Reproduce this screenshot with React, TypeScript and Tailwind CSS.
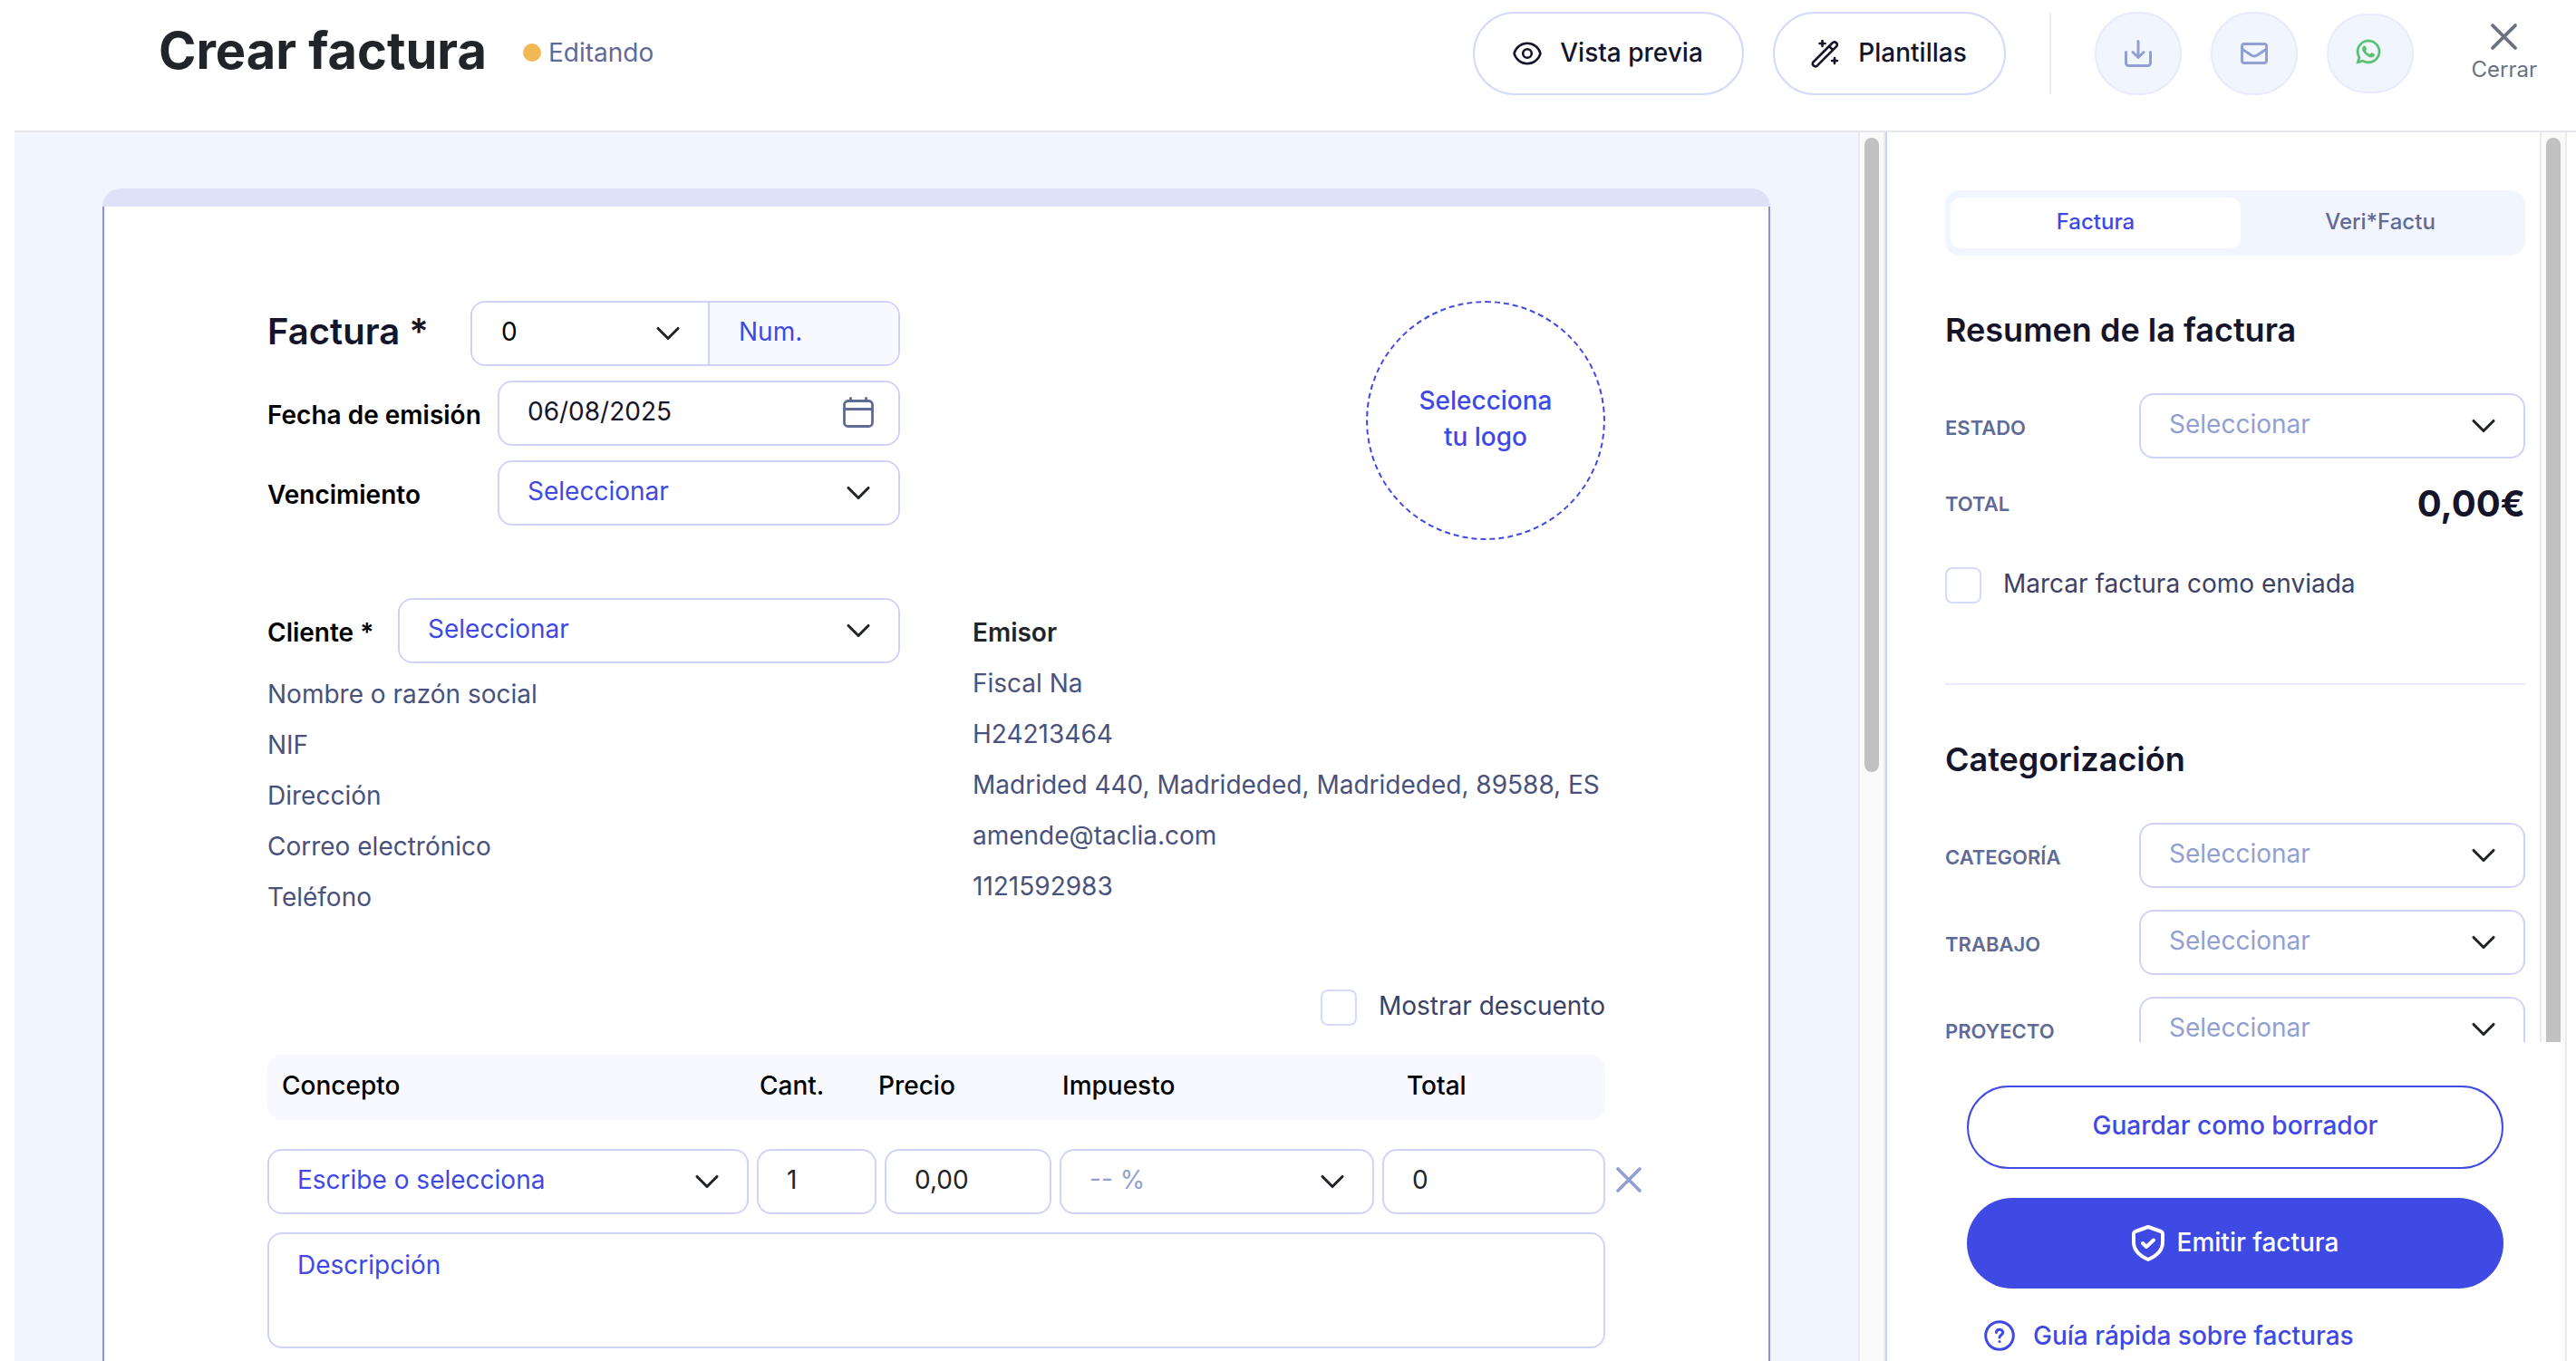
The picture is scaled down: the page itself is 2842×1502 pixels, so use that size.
import React, { useState } from 'react'
import { ChevronDown } from 'lucide-react'
import { FaWhatsapp } from 'react-icons/fa'

const fieldClass =
  'h-[72px] w-full rounded-2xl border-2 border-[#d0d3f8] bg-white px-[31px] pb-1 text-[28px] outline-none'

type SelectProps = {
  id: string
  placeholder: string
  label?: string
  tone?: string
  className?: string
}

const SelectField: React.FC<SelectProps> = ({
  id,
  placeholder,
  label,
  tone = 'text-[#3f49e3]',
  className = '',
}) => (
  <div className={`relative min-w-0 ${className}`}>
    <select
      id={id}
      aria-label={label}
      className={`${fieldClass} appearance-none ${tone}`}
    >
      <option>{placeholder}</option>
    </select>
    <ChevronDown
      size={44}
      strokeWidth={1.7}
      className="pointer-events-none absolute right-6 top-3.5 text-[#212529]"
    />
  </div>
)

type CheckProps = { id: string; label: string }

const CheckField: React.FC<CheckProps> = ({ id, label }) => (
  <div className="flex items-center gap-6">
    <input
      id={id}
      type="checkbox"
      className="size-10 appearance-none rounded-lg border-2 border-[#d5dcfa] bg-white checked:bg-[#3f49e3]"
    />
    <label htmlFor={id} className="pb-1 text-[28px] leading-9 text-[#3b4266]">
      {label}
    </label>
  </div>
)

const Scrollbar: React.FC<{ thumb: string }> = ({ thumb }) => (
  <div
    aria-hidden="true"
    className="flex w-[30px] shrink-0 justify-center border-x-2 border-[#ebebeb] bg-[#fafafa] pt-1.5"
  >
    <div className={`w-4 rounded-full bg-[#c1c1c1] ${thumb}`} />
  </div>
)

const EyeIcon = () => (
  <svg width="32" height="26" viewBox="0 0 32 26" fill="none" stroke="currentColor" strokeWidth="2.6">
    <path d="M1.500 13C3.500 6 9.500 1.800 16 1.800S28.500 6 30.500 13C28.500 20 22.500 24.200 16 24.200S3.500 20 1.500 13Z" strokeLinejoin="round" />
    <circle cx="16" cy="13" r="4.800" />
  </svg>
)

const WandIcon = () => (
  <svg width="32" height="32" viewBox="0 0 32 32" fill="none" stroke="currentColor" strokeWidth="2.6" strokeLinecap="round" strokeLinejoin="round">
    <path d="M2.500 25.500 24 4a3 3 0 0 1 4.200 4.200L6.700 29.700a3 3 0 0 1-4.200-4.200ZM20 8l4.200 4.200" />
    <path d="M12.500 2v6M9.500 5h6M26 21v6M23 24h6" />
  </svg>
)

const DownloadIcon = () => (
  <svg width="30" height="30" viewBox="0 0 30 30" fill="none" stroke="currentColor" strokeWidth="3" strokeLinecap="round" strokeLinejoin="round">
    <path d="M1.500 13.500v12a3 3 0 0 0 3 3h21a3 3 0 0 0 3-3v-12M15 1.500V19M9 13.500l6 6 6-6" />
  </svg>
)

const MailIcon = () => (
  <svg width="30" height="24" viewBox="0 0 30 24" fill="none" stroke="currentColor" strokeWidth="3" strokeLinejoin="round">
    <rect x="1.500" y="1.500" width="27" height="21" rx="2.500" />
    <path d="m2 7.500 9.500 6.300a6.500 6.500 0 0 0 7 0L28 7.500" />
  </svg>
)

const CloseIcon: React.FC<{ size: number }> = ({ size }) => (
  <svg width={size} height={size} viewBox="0 0 28 28" fill="none" stroke="currentColor" strokeWidth="3.6" strokeLinecap="round">
    <path d="M2 2l24 24M26 2 2 26" />
  </svg>
)

const CalendarIcon = () => (
  <svg width="34" height="34" viewBox="0 0 34 34" fill="none" stroke="currentColor" strokeWidth="2.8" strokeLinecap="round">
    <rect x="1.500" y="4.500" width="31" height="28" rx="4" />
    <path d="M1.500 13.500h31M8.500 1.500v3M25.500 1.500v3" />
  </svg>
)

const ShieldIcon = () => (
  <svg width="36" height="40" viewBox="0 0 36 40" fill="none" stroke="currentColor" strokeWidth="4" strokeLinecap="round" strokeLinejoin="round">
    <path d="m18 2 14 5c1.300.500 2 1.500 2 3v9c0 9-7 15-16 19C9 34 2 28 2 19v-9c0-1.500.700-2.500 2-3Z" />
    <path d="m12 20 4 4 8-7.500" />
  </svg>
)

const HelpIcon = () => (
  <svg width="34" height="34" viewBox="0 0 34 34" fill="none" stroke="currentColor" strokeWidth="3" strokeLinecap="round">
    <circle cx="17" cy="17" r="15.300" />
    <path d="M13.500 13.500c.3-4.500 7.500-4 7.200.2-.2 2.600-3.700 2.600-3.700 5.300" />
    <path d="M17 23.500v.1" />
  </svg>
)

const roundButton =
  'flex w-24 items-center justify-center rounded-full border-2 border-[#e8ebfe] bg-[#f1f5fe]'

const Header: React.FC = () => (
  <header className="ml-4 flex h-[146px] shrink-0 items-start border-b-2 border-[#e5e7eb] pl-[159px] pr-[43px]">
    <h1 className="mt-5 text-[56px] font-bold leading-[72px] text-[#212529]">Crear factura</h1>
    <p className="ml-10 mt-9 flex items-center gap-2 text-[28px] leading-[44px] text-[#5f6b96]">
      <span className="size-5 rounded-full bg-[#f2b856]" />
      Editando
    </p>

    <div className="ml-auto mt-[13px] flex items-center text-[28px] font-medium text-[#14142b]">
      <button className="flex h-[92px] w-[299px] items-center justify-center gap-5 rounded-full border-2 border-[#d3dafa]">
        <EyeIcon />
        <span className="pb-0.5">Vista previa</span>
      </button>
      <button className="ml-8 flex h-[92px] w-[257px] items-center justify-center gap-5 rounded-full border-2 border-[#d3dafa]">
        <WandIcon />
        <span className="pb-0.5">Plantillas</span>
      </button>
      <div className="mx-12 h-[90px] w-0.5 bg-[#e8ebfe]" />
      <div className="flex items-center gap-8">
        <button aria-label="Descargar" className={`${roundButton} h-[92px] text-[#929fd2]`}>
          <DownloadIcon />
        </button>
        <button aria-label="Enviar por correo" className={`${roundButton} h-[92px] text-[#929fd2]`}>
          <MailIcon />
        </button>
        <button aria-label="Enviar por WhatsApp" className={`${roundButton} h-[88px] pb-1 pr-1 text-[#56bf6d]`}>
          <FaWhatsapp size={30} strokeWidth={10} />
        </button>
      </div>
      <button className="ml-16 flex flex-col items-center gap-1.5 text-2xl font-normal text-[#6b7280]">
        <CloseIcon size={29} />
        Cerrar
      </button>
    </div>
  </header>
)

const clientLines = ['Nombre o razón social', 'NIF', 'Dirección', 'Correo electrónico', 'Teléfono']

const issuerLines = [
  'Fiscal Na',
  'H24213464',
  'Madrided 440, Madrideded, Madrideded, 89588, ES',
  'amende@taclia.com',
  '1121592983',
]

const InvoiceHead: React.FC = () => (
  <div className="flex items-start justify-between">
    <div className="flex w-[698px] flex-col gap-4">
      <div className="flex items-center justify-between">
        <label htmlFor="serie" className="pb-1 text-[40px] font-semibold leading-[68px] text-[#14142b]">
          Factura *
        </label>
        <div className="flex h-[72px] w-[474px] overflow-hidden rounded-2xl border-2 border-[#d0d3f8]">
          <div className="relative w-[260px]">
            <select id="serie" className="size-full appearance-none pb-1 pl-8 text-[28px] text-black outline-none">
              <option>0</option>
            </select>
            <ChevronDown size={44} strokeWidth={1.7} className="pointer-events-none absolute right-[22px] top-3 text-[#212529]" />
          </div>
          <input
            aria-label="Número de factura"
            placeholder="Num."
            className="min-w-0 flex-1 border-l-2 border-[#d0d3f8] bg-[#f8f9ff] pb-1 pl-8 text-[28px] outline-none placeholder:text-[#3f49e3]"
          />
        </div>
      </div>
      <div className="flex items-center justify-between">
        <label htmlFor="fecha" className="pt-1 text-[28px] font-semibold text-black">
          Fecha de emisión
        </label>
        <div className="relative w-[444px]">
          <input id="fecha" defaultValue="06/08/2025" className={`${fieldClass} text-[#14142b]`} />
          <span className="pointer-events-none absolute right-[29px] top-[18px] text-[#5f6b96]">
            <CalendarIcon />
          </span>
        </div>
      </div>
      <div className="flex items-center justify-between">
        <label htmlFor="vencimiento" className="pt-1 text-[28px] font-semibold text-black">
          Vencimiento
        </label>
        <SelectField id="vencimiento" placeholder="Seleccionar" className="w-[444px]" />
      </div>
    </div>
    <button className="size-[264px] rounded-full border-2 border-dashed border-[#3f49e3] pb-1 text-[28px] font-medium leading-10 text-[#3f49e3]">
      Selecciona
      <br />
      tu logo
    </button>
  </div>
)

const Parties: React.FC = () => (
  <div className="mt-16 flex justify-between text-[28px] leading-[56px] text-[#49527c]">
    <div className="w-[698px]">
      <div className="mb-1.5 flex items-center justify-between">
        <label htmlFor="cliente" className="pt-1 font-semibold text-black">
          Cliente *
        </label>
        <SelectField id="cliente" placeholder="Seleccionar" className="w-[554px] leading-normal" />
      </div>
      <ul>
        {clientLines.map((line) => (
          <li key={line}>{line}</li>
        ))}
      </ul>
    </div>
    <div className="w-[698px] whitespace-nowrap pt-2.5">
      <h2 className="font-semibold text-[#212529]">Emisor</h2>
      <ul>
        {issuerLines.map((line) => (
          <li key={line}>{line}</li>
        ))}
      </ul>
    </div>
  </div>
)

const LineItems: React.FC = () => (
  <>
    <div className="mb-8 mt-[74px] flex justify-end">
      <CheckField id="descuento" label="Mostrar descuento" />
    </div>
    <table className="w-full table-fixed border-separate border-spacing-0 text-[28px]">
      <colgroup>
        <col />
        <col className="w-[141px]" />
        <col className="w-[193px]" />
        <col className="w-[356px]" />
        <col className="w-[255px]" />
      </colgroup>
      <thead>
        <tr className="h-[72px] bg-[#f8f9ff] text-left text-black">
          <th className="rounded-l-2xl pb-1 pl-4 font-medium">Concepto</th>
          <th className="pb-1 pl-3 font-medium">Cant.</th>
          <th className="pb-1 pl-0.5 font-medium">Precio</th>
          <th className="pb-1 pl-3 font-medium">Impuesto</th>
          <th className="rounded-r-2xl pb-1 pl-9 font-medium">Total</th>
        </tr>
      </thead>
      <tbody>
        <tr>
          <td className="pt-8">
            <SelectField id="concepto" label="Concepto" placeholder="Escribe o selecciona" />
          </td>
          <td className="pl-[9px] pt-8">
            <input aria-label="Cantidad" defaultValue="1" className={`${fieldClass} text-[#212529]`} />
          </td>
          <td className="pl-[9px] pt-8">
            <input aria-label="Precio" defaultValue="0,00" className={`${fieldClass} text-[#212529]`} />
          </td>
          <td className="pl-[9px] pt-8">
            <SelectField id="impuesto" label="Impuesto" placeholder="-- %" tone="text-[#929fd2]" />
          </td>
          <td className="pl-[9px] pt-8">
            <div className="-mr-10 flex items-center gap-3">
              <input aria-label="Total" defaultValue="0" className={`${fieldClass} text-[#212529]`} />
              <button aria-label="Eliminar línea" className="shrink-0 pb-1 text-[#929fd2]">
                <CloseIcon size={28} />
              </button>
            </div>
          </td>
        </tr>
        <tr>
          <td colSpan={5} className="pt-5">
            <textarea
              aria-label="Descripción"
              placeholder="Descripción"
              className="block h-32 w-full resize-none rounded-2xl border-2 border-[#d0d3f8] px-[31px] py-3.5 leading-10 outline-none placeholder:text-[#3f49e3]"
            />
          </td>
        </tr>
      </tbody>
    </table>
  </>
)

const categories = [
  { id: 'categoria', label: 'CATEGORÍA' },
  { id: 'trabajo', label: 'TRABAJO' },
  { id: 'proyecto', label: 'PROYECTO' },
]

const Sidebar: React.FC = () => {
  const [tab, setTab] = useState('Factura')

  return (
    <aside className="relative flex w-[752px] shrink-0 border-l-2 border-[#d0d3f8] bg-white">
      <div className="min-w-0 flex-1 overflow-hidden px-4 pl-16 pt-16">
        <div role="tablist" className="flex h-[72px] rounded-2xl bg-[#f1f5fe] px-1.5 py-2">
          {['Factura', 'Veri*Factu'].map((name) => (
            <button
              key={name}
              role="tab"
              aria-selected={tab === name}
              onClick={() => setTab(name)}
              className={`rounded-xl pb-0.5 text-2xl font-medium ${
                tab === name ? 'w-[320px] bg-white text-[#3f49e3]' : 'flex-1 text-[#5f6b96]'
              }`}
            >
              {name}
            </button>
          ))}
        </div>

        <h2 className="mt-[60px] text-[36px] font-semibold leading-[44px] text-[#14142b]">
          Resumen de la factura
        </h2>
        <div className="mt-12 flex items-center justify-between">
          <label htmlFor="estado" className="pt-1 text-[22px] font-semibold text-[#5f6b96]">
            ESTADO
          </label>
          <SelectField id="estado" placeholder="Seleccionar" tone="text-[#929fd2]" className="w-[426px]" />
        </div>
        <div className="mt-6 flex items-center justify-between leading-[52px]">
          <span className="text-[22px] font-semibold text-[#5f6b96]">TOTAL</span>
          <span className="text-[40px] font-bold text-[#14142b]">0,00€</span>
        </div>
        <div className="mt-11">
          <CheckField id="enviada" label="Marcar factura como enviada" />
        </div>

        <hr className="mt-[88px] border-t-2 border-[#e8ebfe]" />

        <h2 className="mt-[60px] text-[36px] font-semibold leading-[44px] text-[#14142b]">
          Categorización
        </h2>
        <div className="mt-12 flex flex-col gap-6">
          {categories.map((item) => (
            <div key={item.id} className="flex items-center justify-between">
              <label htmlFor={item.id} className="pt-1 text-[22px] font-semibold text-[#5f6b96]">
                {item.label}
              </label>
              <SelectField id={item.id} placeholder="Seleccionar" tone="text-[#929fd2]" className="w-[426px]" />
            </div>
          ))}
        </div>
      </div>
      <Scrollbar thumb="h-full" />

      <div className="absolute bottom-0 left-0 right-1.5 flex flex-col bg-white pb-1.5 pl-[88px] pr-16 pt-12 text-[28px] font-medium text-[#3f49e3]">
        <button className="h-[92px] rounded-full border-2 border-[#3f49e3] pb-1">
          Guardar como borrador
        </button>
        <button className="mt-8 flex h-[100px] items-center justify-center gap-3.5 rounded-full bg-[#3f49e3] text-white">
          <ShieldIcon />
          <span className="pb-0.5">Emitir factura</span>
        </button>
        <a href="#guia" className="mt-[30px] flex items-center gap-5 pl-[19px] leading-[44px]">
          <HelpIcon />
          Guía rápida sobre facturas
        </a>
      </div>
    </aside>
  )
}

const App: React.FC = () => (
  <div className="flex h-screen flex-col overflow-hidden bg-white font-['Inter',sans-serif]">
    <Header />
    <div className="ml-4 mr-2.5 flex min-h-0 flex-1">
      <main className="min-w-0 flex-1 overflow-hidden bg-[#f1f5fe] px-[97px] pt-[62px]">
        <div className="h-5 rounded-t-[20px] bg-[#dde2f8]" />
        <div className="border-x-2 border-[#8a90e0] bg-white px-[180px] pb-20 pt-[104px]">
          <InvoiceHead />
          <Parties />
          <LineItems />
        </div>
      </main>
      <Scrollbar thumb="h-[700px]" />
      <Sidebar />
    </div>
  </div>
)

export default App
